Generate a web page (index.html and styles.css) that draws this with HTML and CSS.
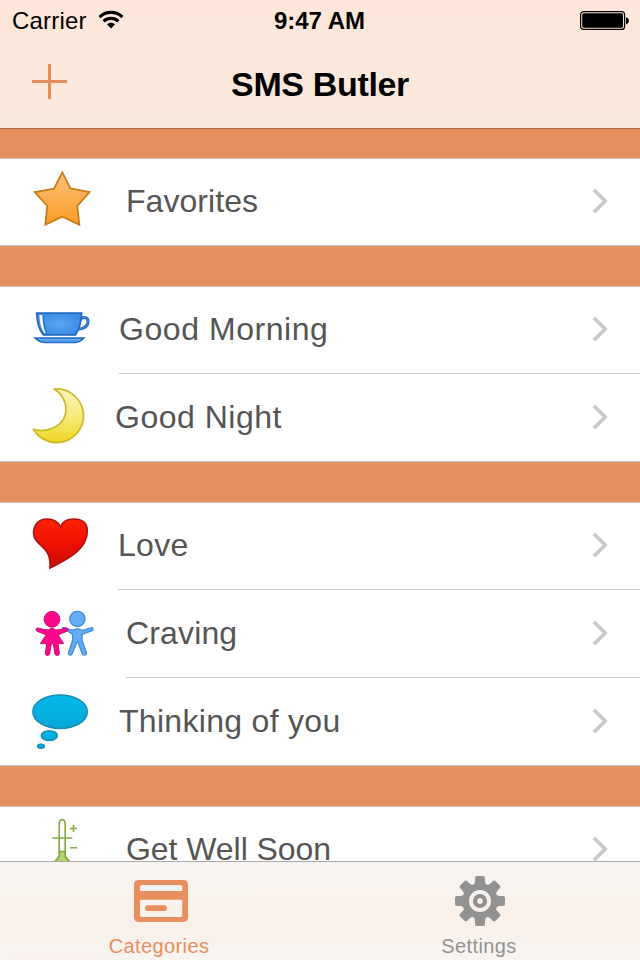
FILE: index.html
```html
<!DOCTYPE html>
<html lang="en">
<head>
<meta charset="utf-8">
<title>SMS Butler</title>
<link rel="stylesheet" href="styles.css">
</head>
<body>
<svg class="defs" width="0" height="0" aria-hidden="true">
  <defs>
    <linearGradient id="gold" x1="0" y1="0" x2="0" y2="1"><stop offset="0" stop-color="#fdc27c"/><stop offset="1" stop-color="#fc9a26"/></linearGradient>
    <radialGradient id="blue"><stop offset="0" stop-color="#5aa6f2"/><stop offset="1" stop-color="#3c8de6"/></radialGradient>
    <linearGradient id="moon" x1="0" y1="0" x2="0" y2="1"><stop offset="0" stop-color="#fbf5b8"/><stop offset=".5" stop-color="#f6ea80"/><stop offset="1" stop-color="#efd61e"/></linearGradient>
    <linearGradient id="red" x1="0" y1="0" x2="0" y2="1"><stop offset="0" stop-color="#ff2205"/><stop offset=".5" stop-color="#ee1000"/><stop offset="1" stop-color="#c90b0b"/></linearGradient>
    <linearGradient id="cyan" x1="0" y1="0" x2="0" y2="1"><stop offset="0" stop-color="#02b9ec"/><stop offset="1" stop-color="#06a7da"/></linearGradient>
    <symbol id="chevron" viewBox="0 0 20 30"><path d="M3.9 3.7 15.2 15 3.9 26.3" fill="none" stroke="#c7c7cc" stroke-width="3.6"/></symbol>
  </defs>
</svg>
<div class="phone">
  <header class="header">
    <div class="status">
      <div class="carrier">
        <span>Carrier</span>
        <svg class="wifi" width="26" height="20" viewBox="0 0 26 20">
          <g fill="none" stroke="#000" stroke-width="3.2">
            <path d="M1.6 7.1C7.8.9 18.2.9 24.4 7.1"/>
            <path d="M5.7 11.3C9.8 7.5 16.2 7.5 20.3 11.3"/>
          </g>
          <path d="M8.9 14.2C11.2 12.1 14.8 12.1 17.1 14.2L13 18.4Z"/>
        </svg>
      </div>
      <div class="time">9:47 AM</div>
      <svg class="battery" width="50" height="20" viewBox="0 0 50 20">
        <rect x=".6" y=".6" width="44" height="17.8" rx="3" fill="none" stroke="#000" stroke-width="1.2"/>
        <rect x="2.2" y="2.2" width="40.8" height="14.6" rx="1.5"/>
        <path d="M46 6.2C49.8 6.8 49.8 12.6 46 13.2Z"/>
      </svg>
    </div>
    <div class="navbar">
      <svg class="add" width="36" height="36" viewBox="0 0 36 36"><path d="M0 17.5H35M17.5 0V35" stroke="#e68f5e" stroke-width="3"/></svg>
      <h1 class="title">SMS Butler</h1>
    </div>
  </header>

  <main class="list">
    <section class="group">
      <div class="row row-favorites">
        <svg class="icon" viewBox="0 0 100 88"><path d="M62.3 14.4 70.3 30.3 89.5 34 77.3 48 79.3 66.7 62.3 58.7 45.3 66.7 47.3 48 34.8 34 54 30.6Z" fill="url(#gold)" stroke="#c97c15" stroke-width="1.8"/></svg>
        <div class="cell"><span>Favorites</span><svg class="chevron"><use href="#chevron"/></svg></div>
      </div>
    </section>

    <section class="group">
      <div class="row row-morning">
        <svg class="icon" viewBox="0 0 100 88">
          <path d="M81.5 32.5C85 30.2 88 32 88 35.5C88 40 84 42.5 79 43.2" fill="none" stroke="#2167c1" stroke-width="3"/>
          <path d="M81.5 32.5C85 30.2 88 32 88 35.5C88 40 84 42.5 79 43.2" fill="none" stroke="#448fe3" stroke-width="1"/>
          <path d="M36.7 27.2H81.7C81.2 36 79 43.5 75.5 48.8H43.3C39 44 37 36 36.7 27.2Z" fill="url(#blue)" stroke="#2167c1" stroke-width="1.7"/>
          <path d="M39.4 29H42.4C42.4 36.5 43.5 42 45.6 47H44.2C41 42.5 39.6 36 39.4 29Z" fill="#fff"/>
          <path d="M43.6 29C43.6 36.5 44.6 42 46.6 47" fill="none" stroke="#2167c1"/>
          <path d="M35.2 52.1H83.8C81 55 78.5 56.5 75.5 56.5H46C41.5 56.5 38 54.8 35.2 52.1Z" fill="#6aaff3" stroke="#2167c1" stroke-width="1.5"/>
          <path d="M42 54.4H78" stroke="#3f87db" stroke-width=".7"/>
        </svg>
        <div class="cell"><span>Good Morning</span><svg class="chevron"><use href="#chevron"/></svg></div>
      </div>
      <div class="row row-night">
        <svg class="icon" viewBox="0 0 100 88"><path d="M54 15.1A26.8 26.8 0 1 1 33.5 55.2C50 60 66 50 66 35.5C66 27 61.5 19 54 15.1Z" fill="url(#moon)" stroke="#cdb923" stroke-width="1.7" stroke-linejoin="round"/></svg>
        <div class="cell"><span>Good Night</span><svg class="chevron"><use href="#chevron"/></svg></div>
      </div>
    </section>

    <section class="group">
      <div class="row row-love">
        <svg class="icon" viewBox="0 0 100 88"><path d="M60.7 25C58 19 52 17 47 17C39 17 33.6 22.5 33.6 31C33.6 44 52 43 50 66C61 60 87.3 50 87.3 29C87.3 21 82 17 74 17C67 17 62 20 60.7 25Z" fill="url(#red)" stroke="#b31212" stroke-width="1.7"/></svg>
        <div class="cell"><span>Love</span><svg class="chevron"><use href="#chevron"/></svg></div>
      </div>
      <div class="row row-craving">
        <svg class="icon" viewBox="0 0 100 88">
          <g fill="#64adf5" stroke="#438dd8" stroke-width="1.3" stroke-linejoin="round">
            <path d="M62.5 37.6C66 37 69 39.8 73 40.2Q77.3 37.5 81.5 40.2C85 40.5 88 38.5 91.5 37.5C93.6 37.7 93.5 40.3 91.8 40.9C88.7 42 85.5 43 82.3 44.2L82 50L86.5 63C86.4 65.6 83 65.8 82.3 63.8L78 52.3H76.8L72.2 63.8C71.4 65.8 68 65.5 68.4 63L72.7 50 72.5 44.2Z"/>
            <circle cx="77.4" cy="28.9" r="7.6"/>
          </g>
          <g fill="#fb0789" stroke="#d10676" stroke-linejoin="round">
            <path d="M37.6 38C41.5 38.5 45 40.5 48.5 39.7Q52 37 55.5 39.7C59 40.5 62.5 38.5 66.4 38C68.4 38.6 68.4 40.6 66.8 41.3C63.5 42.6 60.6 43.8 58 44.8L63.6 53.6H58L59.4 63.7C59.2 65.9 55.6 66.1 55 64L53.3 53.8H51.3L49.6 64C49 66.1 45.5 65.9 45.4 63.7L46.6 53.6H40.4L46.2 44.8C43.5 43.8 40.5 42.6 37.2 41.3C35.6 40.6 35.6 38.6 37.6 38Z"/>
            <circle cx="52" cy="29.3" r="7.9"/>
          </g>
        </svg>
        <div class="cell"><span>Craving</span><svg class="chevron"><use href="#chevron"/></svg></div>
      </div>
      <div class="row row-thinking">
        <svg class="icon" viewBox="0 0 100 88">
          <g fill="url(#cyan)" stroke="#188fae" stroke-width="1.6">
            <ellipse cx="60.1" cy="33.7" rx="27.2" ry="16.7"/>
            <ellipse cx="49.3" cy="57.7" rx="8" ry="4.8"/>
            <ellipse cx="41" cy="68.2" rx="3.3" ry="1.9"/>
          </g>
        </svg>
        <div class="cell"><span>Thinking of you</span><svg class="chevron"><use href="#chevron"/></svg></div>
      </div>
    </section>

    <section class="group">
      <div class="row row-well">
        <svg class="icon" viewBox="0 0 100 88">
          <g fill="none" stroke="#83a841" stroke-width="1.6">
            <path d="M59.2 45.5H65.2V50C66 53 70 54 70 57V70H54.5V57C54.5 54 58.5 53 59.2 50Z" fill="#afd468"/>
            <path d="M59.2 46V19C59.2 11.8 65.2 11.8 65.2 19V46M52.3 32H72.3M70 22.5H77M73.5 19V26M70 41.8H77"/>
          </g>
        </svg>
        <div class="cell"><span>Get Well Soon</span><svg class="chevron"><use href="#chevron"/></svg></div>
      </div>
    </section>
  </main>

  <nav class="tabbar">
    <div class="tab tab-active">
      <svg class="card" width="54" height="50" viewBox="0 0 54 50"><path fill="currentColor" fill-rule="evenodd" d="M5 4H49Q54 4 54 9V41Q54 46 49 46H5Q0 46 0 41V9Q0 4 5 4ZM8 9Q6 9 6 11V15H48.3V11Q48.3 9 46.3 9ZM6 23.7V39Q6 41 8 41H46.3Q48.3 41 48.3 39V23.7ZM14 29.3H30A2.9 2.9 0 0 1 30 35.1H14A2.9 2.9 0 0 1 14 29.3Z"/></svg>
      <span>Categories</span>
    </div>
    <div class="tab">
      <svg width="50" height="50" viewBox="-25 -25 50 50">
        <g fill="currentColor">
          <path id="tooth" d="M-6 16.8-5 14H5L6 16.8Q5 18 5 20V23Q5 25 3 25H-3Q-5 25-5 23V20Q-5 18-6 16.8Z"/>
          <use href="#tooth" transform="rotate(45)"/><use href="#tooth" transform="rotate(90)"/><use href="#tooth" transform="rotate(135)"/><use href="#tooth" transform="rotate(180)"/><use href="#tooth" transform="rotate(225)"/><use href="#tooth" transform="rotate(270)"/><use href="#tooth" transform="rotate(315)"/>
        </g>
        <circle r="14.4" fill="none" stroke="currentColor" stroke-width="6.8"/>
        <circle r="5" fill="none" stroke="currentColor" stroke-width="4.2"/>
      </svg>
      <span>Settings</span>
    </div>
  </nav>
</div>
</body>
</html>
```
FILE: styles.css
```css
* {
  box-sizing: border-box;
}

body {
  margin: 0;
  font-family: "Liberation Sans", Arial, sans-serif;
}

svg {
  display: block;
  flex: none;
}

.defs {
  height: 0;
}

.phone {
  display: flex;
  flex-direction: column;
  width: 640px;
  height: 960px;
  overflow: hidden;
  background: #e78f5e;
}

.header {
  flex: none;
  height: 129px;
  background: linear-gradient(#fee7da 0, #fce8dc 105px, #fbe9dd 128px);
  border-bottom: 1px solid #a96a47;
}

.status {
  display: grid;
  grid-template-columns: 1fr auto 1fr;
  height: 40px;
  padding: 0 10px 0 12px;
  font-size: 24px;
  line-height: 41px;
}

.carrier {
  display: flex;
  gap: 11px;
  letter-spacing: 0.2px;
}

.wifi {
  margin-top: 10px;
}

.time {
  margin-left: -3px;
  font-weight: 700;
}

.battery {
  justify-self: end;
  margin-top: 11px;
}

.navbar {
  display: grid;
  grid-template-columns: 1fr auto 1fr;
  height: 88px;
  padding: 0 32px;
}

.add {
  margin-top: 24px;
}

.title {
  margin: 0;
  font-size: 34px;
  line-height: 88px;
  letter-spacing: -0.35px;
}

.list {
  display: flex;
  flex: 1;
  flex-direction: column;
  gap: 40px;
  min-height: 0;
  padding-top: 29px;
  overflow: hidden;
}

.group {
  flex: none;
  background:
    linear-gradient(#c8c7cc, #c8c7cc) top / 100% 1px no-repeat,
    linear-gradient(#c8c7cc, #c8c7cc) bottom / 100% 1px no-repeat,
    #fff;
}

.row {
  display: flex;
  height: 88px;
}

.icon {
  width: 100px;
  height: 88px;
}

.cell {
  display: flex;
  flex: 1;
  justify-content: space-between;
  margin-left: 18px;
  padding-right: 30px;
  border-bottom: 1px solid #c8c7cc;
  color: #555;
  font-size: 32px;
  line-height: 86px;
  letter-spacing: 0.3px;
}

.chevron {
  width: 20px;
  height: 30px;
  margin-top: 28px;
}

.row-favorites .cell,
.row-craving .cell,
.row-well .cell {
  margin-left: 26px;
}

.row-favorites .cell {
  letter-spacing: 0.05px;
}

.row-craving .cell {
  letter-spacing: 0.15px;
}

.row-well .cell {
  letter-spacing: -0.05px;
}

.row-morning .cell {
  margin-left: 19px;
  letter-spacing: 0.55px;
}

.row-night .cell {
  margin-left: 15px;
  letter-spacing: 0.5px;
}

.row-thinking .cell {
  margin-left: 19px;
}

.tabbar {
  display: flex;
  flex: none;
  height: 99px;
  background:
    radial-gradient(ellipse at 60px 100px, #fae9e780, #fae9e700 80px),
    linear-gradient(#f8f4f1 0, #f8f3ef 25px, #fbf1eb 45px, #faf0ea 70px, #f8f4f0 85px);
  border-top: 1px solid #aaa7a9;
}

.tab {
  display: flex;
  flex: 1;
  flex-direction: column;
  align-items: center;
  padding-top: 14px;
  color: #929292;
  font-size: 20px;
  line-height: 24px;
  letter-spacing: 0.4px;
}

.tab span {
  margin: 8px 2px 0 0;
}

.tab-active {
  color: #e78f5e;
}

.card {
  margin-left: 2px;
}
```
